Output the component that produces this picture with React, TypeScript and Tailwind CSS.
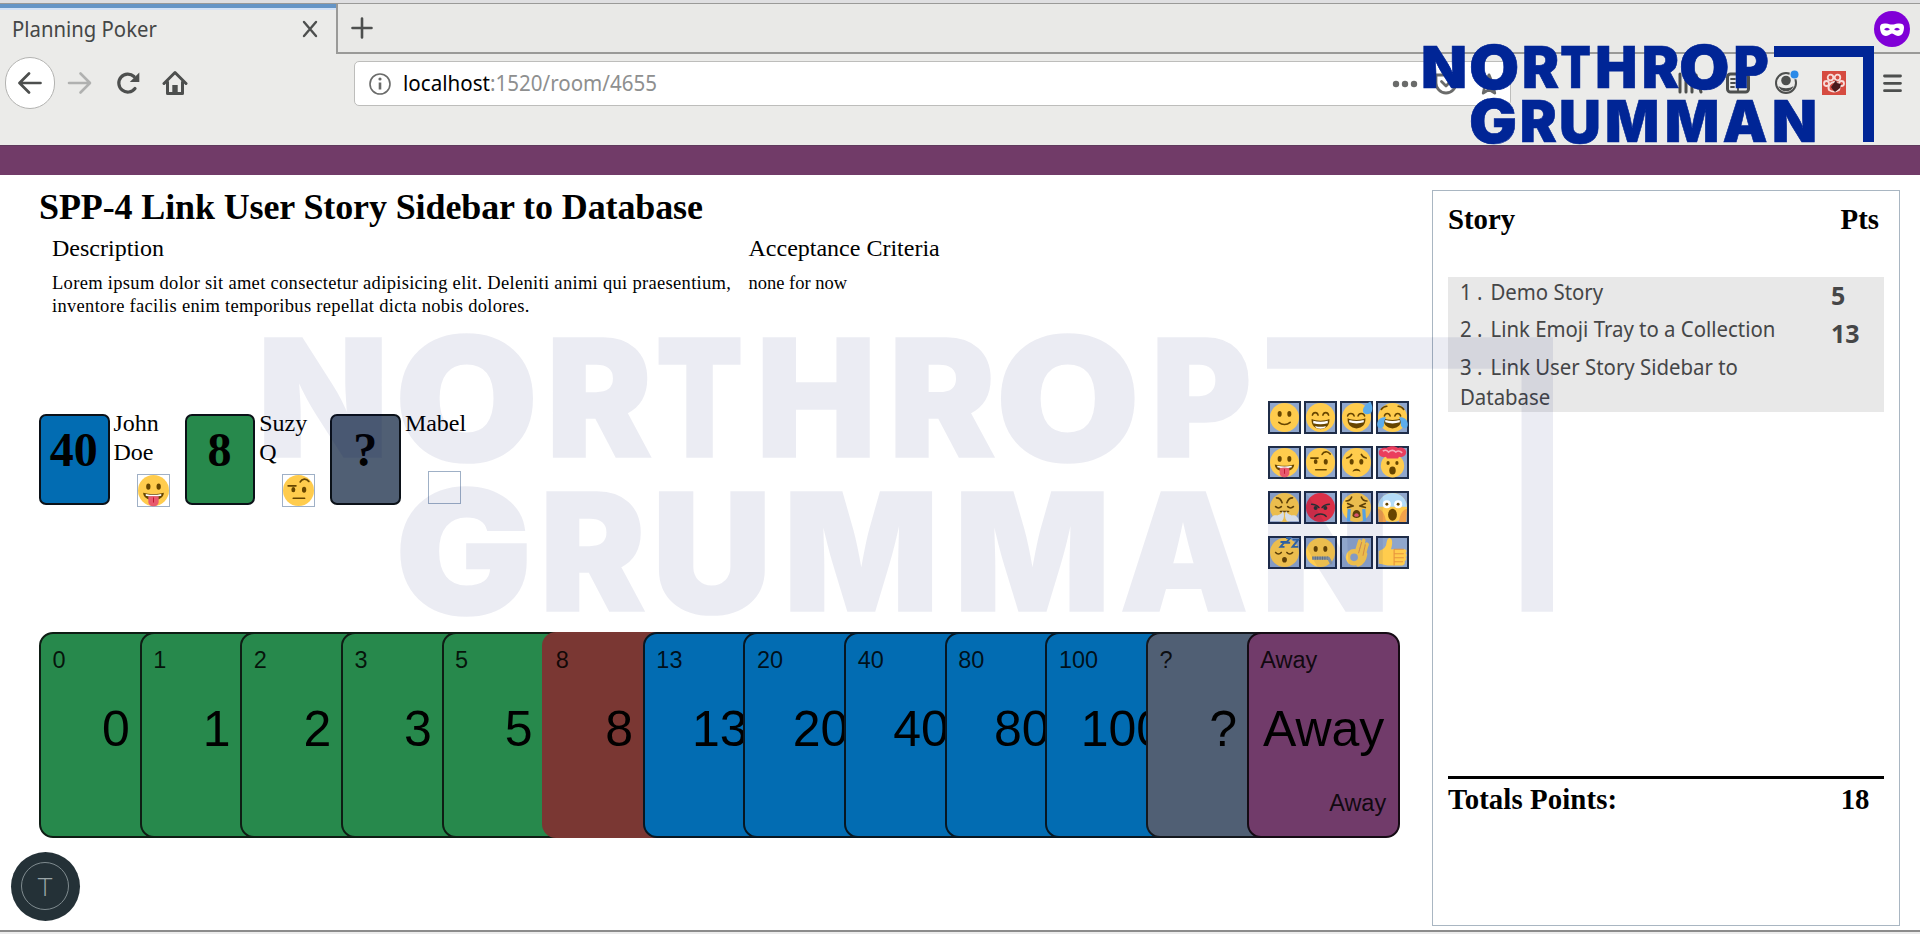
import React, { useMemo } from "react";

/* ---------- Brand wordmark ---------- */

type Glyph = [string, number, number];

const ROW_ONE: Glyph[] = [
  ["N", 0, 42],
  ["O", 47.7, 95],
  ["R", 101, 136],
  ["T", 138, 167],
  ["H", 174.3, 212.5],
  ["R", 220.7, 256],
  ["O", 257.7, 305.3],
  ["P", 312.3, 345],
];
const ROW_TWO: Glyph[] = [
  ["G", 47.7, 92.3],
  ["R", 98.7, 133.7],
  ["U", 138, 175.7],
  ["M", 184, 234],
  ["M", 243.7, 294],
  ["A", 300.3, 344],
  ["N", 351, 392],
];
const CAP = 42.3;
const OVERSHOOT = 1.8;
const OUTLINE = 1;
const FACE = "900 100px Inter, 'Open Sans', sans-serif";

/* Fits every letter's ink, outline included, to its slot in the mark. */
function measure(rows: [Glyph[], number][]) {
  const ctx = document.createElement("canvas").getContext("2d")!;
  ctx.font = FACE;
  const half = OUTLINE / 2;
  return rows.flatMap(([row, baseline]) =>
    row.map(([ch, from, to]) => {
      const m = ctx.measureText(ch);
      const left = -m.actualBoundingBoxLeft - half;
      const sx = (to - from) / (m.actualBoundingBoxRight + half - left);
      const round = ch === "O" || ch === "G";
      const top = baseline - CAP - (round ? OVERSHOOT : 0);
      const bottom = baseline + (round || ch === "U" ? OVERSHOOT : 0);
      const ascent = m.actualBoundingBoxAscent + half;
      const sy = (bottom - top) / (ascent + m.actualBoundingBoxDescent + half);
      return { ch, transform: `translate(${from - left * sx} ${top + ascent * sy}) scale(${sx} ${sy})` };
    }),
  );
}

function Wordmark({ className }: { className: string }) {
  const letters = useMemo(() => measure([[ROW_ONE, 42.3], [ROW_TWO, 96]]), []);
  return (
    <svg viewBox="0 0 451 96" className={className} fill="currentColor" overflow="visible">
      <g stroke="currentColor" strokeWidth={OUTLINE} strokeLinejoin="miter">
        {letters.map((l, i) => (
          <text key={i} transform={l.transform} className="font-['Inter','Open_Sans',sans-serif] text-[100px] font-black">
            {l.ch}
          </text>
        ))}
      </g>
      <path d="M351 0H451V96H440V11H351Z" />
    </svg>
  );
}

/* ---------- Emoji ---------- */

const Y = "#ffcc4d";
const B = "#664500";

const Face = ({ fill = Y }: { fill?: string }) => <circle cx="18" cy="18" r="18" fill={fill} />;
const Eyes = ({ y = 13.5 }: { y?: number }) => (
  <g fill={B}>
    <ellipse cx="12" cy={y} rx="2.5" ry="3.5" />
    <ellipse cx="24" cy={y} rx="2.5" ry="3.5" />
  </g>
);
const line = { fill: "none", stroke: B, strokeWidth: 2, strokeLinecap: "round" as const, strokeLinejoin: "round" as const };
const Grin = ({ y = 0 }: { y?: number }) => (
  <g transform={`translate(0 ${y})`}>
    <path d="M7 19c3 1.300 7 2 11 2s8-.7 11-2c.8 7-4 12.500-11 12.500S6.200 26 7 19Z" fill={B} />
    <path d="M9 21c3 1 6 1.400 9 1.400s6-.4 9-1.400v3c-3 1-6 1.300-9 1.300S12 25 9 24Z" fill="#fff" />
  </g>
);

const EMOJI: Record<string, React.ReactNode> = {
  smile: (
    <>
      <Face />
      <Eyes />
      <path d="M11 24c4 3.500 10 3.500 14 0" {...line} />
    </>
  ),
  beam: (
    <>
      <Face />
      <path d="M8 15c1-4 6-4 7 0M21 15c1-4 6-4 7 0" {...line} />
      <Grin y={1} />
      <path d="M11 28.500c5 1.500 9 1.500 14 0l-2 2.500q-5 2-10 0Z" fill="#fff" />
    </>
  ),
  sweat: (
    <>
      <Face />
      <path d="M7 16c1-4 7-4 8 0M20 16c1-4 7-4 8 0" {...line} />
      <Grin />
      <path d="M26 10c-.5-5 4-9 9-12 3 4 4 12 0 15-4 2-8.500 1-9-3Z" fill="#5dadec" />
    </>
  ),
  joy: (
    <>
      <Face />
      <path d="M4 8c2-3 4-4 7-4M32 8c-2-3-4-4-7-4M8 16c1-4 6-4 7 0M21 16c1-4 6-4 7 0" {...line} />
      <Grin />
      <path d="M10 18C5 17-1 20-1 27c0 5 6 6 8 2 1-2 0-7 3-11ZM26 18c5-1 11 2 11 9 0 5-6 6-8 2-1-2 0-7-3-11Z" fill="#5dadec" />
    </>
  ),
  tongue: (
    <>
      <Face />
      <Eyes />
      <path d="M6 20.500c7 2 17 2 24 0 0 5-5 8.500-12 8.500S6 25.500 6 20.500Z" fill={B} />
      <path d="M9 22c6 1.300 12 1.300 18 0v2c-6 1.500-12 1.500-18 0Z" fill="#fff" />
      <path d="M12 25c4-1 8-1 12 0v6c0 7-12 7-12 0Z" fill="#e8596e" />
      <path d="M18 26v6" stroke="#be1931" strokeWidth="1.200" />
    </>
  ),
  brow: (
    <>
      <Face />
      <ellipse cx="12" cy="17" rx="2.300" ry="3" fill={B} />
      <ellipse cx="24.500" cy="17" rx="2.500" ry="3.500" fill={B} />
      <path d="M6 12.500h9M20 8c2-4 7-4.500 10-.5M12 27h13" {...line} />
    </>
  ),
  worried: (
    <>
      <Face />
      <Eyes y={17} />
      <path d="M6 12.500c3-.5 5-2.500 6-4.500M30 12.500c-3-.5-5-2.500-6-4.500" {...line} />
      <path d="M13 29.500c1-5 9-5 10 0-3-1.500-7-1.500-10 0Z" fill={B} />
    </>
  ),
  explode: (
    <>
      <circle cx="18" cy="22" r="14.500" fill={Y} />
      <path d="M1 6C1 1 7-1 10 0c5-3 11-3 15 0 4-2 10 1 10 5 0 5-5 7-9 6l-1 2H11l-1-2C6 12 1 11 1 6Z" fill="#ea3d5d" />
      <path d="M6 4q4-3 7 1 5-4 9 0 4-3 8 1" stroke="#f4abba" strokeWidth="2" fill="none" />
      <ellipse cx="12.500" cy="18.500" rx="2" ry="2.500" fill={B} />
      <ellipse cx="23.500" cy="18.500" rx="2" ry="2.500" fill={B} />
      <ellipse cx="18" cy="28" rx="4" ry="5" fill={B} />
    </>
  ),
  steam: (
    <>
      <Face />
      <path d="M8 6c4 0 6 3 7 6M28 6c-4 0-6 3-7 6M7 17c2 2 5 2 7 0M22 17c2 2 5 2 7 0M13 23h10" {...line} />
      <path d="M16 22c-2 5-4 4-7 6-4-1-8 1-9 7h15c3-4 3-9 1-13ZM20 22c2 5 4 4 7 6 4-1 8 1 9 7H21c-3-4-3-9-1-13Z" fill="#e9eff3" />
    </>
  ),
  rage: (
    <>
      <Face fill="#da2f47" />
      <path d="M7 14c4 0 7 1.500 9 4M29 14c-4 0-7 1.500-9 4" {...line} stroke="#292f33" />
      <circle cx="12" cy="18.500" r="2.500" fill="#292f33" />
      <circle cx="24" cy="18.500" r="2.500" fill="#292f33" />
      <path d="M11 29c3-4 11-4 14 0" {...line} stroke="#292f33" />
    </>
  ),
  sob: (
    <>
      <Face />
      <path d="M5 10c3 0 6-2 7-5M31 10c-3 0-6-2-7-5M7 13l7 3-7 2M29 13l-7 3 7 2" {...line} />
      <path d="M7 20h4l-1 15H6ZM25 20h4l1 15h-4Z" fill="#5dadec" />
      <path d="M13 28c0-9 10-9 10 0 0 4-10 4-10 0Z" fill={B} />
      <path d="M15 28c1-4 5-4 6 0-1 2-5 2-6 0Z" fill="#ea596e" />
    </>
  ),
  scream: (
    <>
      <Face />
      <path d="M0 17C1 6 9 0 18 0s17 6 18 17Z" fill="#b4dcf8" />
      <circle cx="11" cy="14" r="5" fill="#fff" />
      <circle cx="25" cy="14" r="5" fill="#fff" />
      <circle cx="11" cy="14" r="1.800" fill={B} />
      <circle cx="25" cy="14" r="1.800" fill={B} />
      <ellipse cx="18" cy="27" rx="5.500" ry="7.500" fill={B} />
      <path d="M0 20c5 0 9 7 10 16H1ZM36 20c-5 0-9 7-10 16h9Z" fill="#f2a24a" />
    </>
  ),
  sleep: (
    <>
      <Face />
      <path d="M7 18c2 2.500 5 2.500 7 0M21 18c2 2.500 5 2.500 7 0" {...line} />
      <ellipse cx="18" cy="27" rx="3" ry="3.500" fill={B} />
      <path d="M13 5h5l-5 6h5M20 0h5l-5 6h5M28 2h7l-7 9h7" fill="none" stroke="#3569a8" strokeWidth="2.400" />
    </>
  ),
  zipper: (
    <>
      <Face />
      <Eyes />
      <path d="M8 25h20" stroke="#8b9aa6" strokeWidth="4" />
      <path d="M8 25h20" stroke="#5c6f7d" strokeWidth="4" strokeDasharray="1 2" />
      <path d="M28 25l3 6" stroke="#8b9aa6" strokeWidth="3.500" strokeLinecap="round" />
    </>
  ),
  ok: (
    <>
      <g fill="none" stroke={Y} strokeLinecap="round" strokeLinejoin="round">
        <circle cx="15" cy="24" r="7.500" strokeWidth="5.500" />
        <path d="M18 17L22 4M23 22L27 3" strokeWidth="4.500" />
        <path d="M24 26C29 20 28 14 31 8M20 33C26 31 28 26 29 20" strokeWidth="5" />
      </g>
      <path d="M20.500 19L24.500 5M26 22L29 8" stroke="#e8953e" strokeWidth="1.200" fill="none" />
    </>
  ),
  thumb: (
    <>
      <path d="M1 16c4-1 7-3 9-7 1-4 1-8 4-9 5 0 4 9 2 14h17c3 0 3 4 1 5 2 1 2 4 0 5 2 1 1 4-1 5 1 2 0 5-3 5H12c-4 0-7-2-11-2Z" fill={Y} />
      <path d="M20 14v20M20 19.500h12M20 24.500h12M20 29.500h11M20 14h12" stroke="#e8953e" strokeWidth="1.400" fill="none" />
    </>
  ),
};

const Emoji = ({ name, className }: { name: string; className: string }) => (
  <svg viewBox="0 0 36 36" className={className}>
    {EMOJI[name]}
  </svg>
);

/* ---------- Browser chrome ---------- */

const stroke = { fill: "none", stroke: "#4d4f4e", strokeWidth: 3, strokeLinecap: "round" as const, strokeLinejoin: "round" as const };

function TabStrip() {
  return (
    <div className="flex h-[50px] bg-[#e9e9e7]">
      <div className="flex w-[336px] items-center justify-between border-t-[4px] border-[#6595c6] bg-[#ebebe9] pr-[18px] pb-[4px] pl-[12px] shadow-[inset_0_2px_0_#d3e2f6]">
        <span className="origin-left scale-x-[0.967] text-[21px] leading-[28px] text-[#454746]">Planning Poker</span>
        <svg viewBox="0 0 16 18" className="h-[18px] w-[16px]">
          <path d="M2 2L14 16M14 2L2 16" {...stroke} strokeWidth={2.4} />
        </svg>
      </div>
      <div className="flex flex-1 items-center justify-between border-b-2 border-l-2 border-[#9a9a98] pr-[10px] pl-[13px]">
        <svg viewBox="0 0 22 22" className="-mt-[1px] h-[22px] w-[22px]">
          <path d="M11 1.500V20.500M1.500 11H20.500" {...stroke} strokeWidth={2.6} />
        </svg>
        <svg viewBox="0 0 36 36" className="mt-[2px] h-[36px] w-[36px]">
          <circle cx="18" cy="18" r="18" fill="#8000d7" />
          <path
            fillRule="evenodd"
            fill="#fff"
            d="M6 16c0-3 3-4 6-3.500 3 .4 4 1 6 1s3-.6 6-1c3-.5 6 .5 6 3.500 0 5-2 9-6 9-3 0-4-2.500-6-2.500S15 25 12 25c-4 0-6-4-6-9ZM10 18.300q3 2.500 6 0q-3-3-6 0ZM20 18.300q3 2.500 6 0q-3-3-6 0Z"
          />
        </svg>
      </div>
    </div>
  );
}

function NavBar() {
  return (
    <div className="flex h-[91px] items-start bg-[#ebebe9] pt-[3px]">
      <div className="ml-[5px] flex h-[52px] w-[50px] items-center justify-center rounded-full border-[1.500px] border-[#b3b3b1] bg-white">
        <svg viewBox="0 0 24 24" className="h-[24px] w-[24px]">
          <path d="M22.500 12H2M11 2.500L1.500 12L11 21.500" {...stroke} strokeWidth={2.7} />
        </svg>
      </div>
      <svg viewBox="0 0 24 24" className="mt-[14px] ml-[12px] h-[24px] w-[25px]">
        <path d="M1.500 12H22M13 2.500L22.500 12L13 21.500" {...stroke} stroke="#b0b1b0" strokeWidth={2.6} />
      </svg>
      <svg viewBox="0 0 24 24" className="mt-[14px] ml-[24px] h-[24px] w-[25px]">
        <path d="M18.500 17.500A9 9 0 1 1 17.500 5.500" {...stroke} strokeWidth={3.2} />
        <path d="M22.800 1.500V11H13.300Z" fill="#4d4f4e" />
      </svg>
      <svg viewBox="0 0 26 26" className="mt-[13px] ml-[21px] h-[26px] w-[26px]">
        <path d="M2 13.500L13 2.500L24 13.500M5.500 12V23.500H20.500V12" {...stroke} />
        <path d="M10.300 23V15h5.400v8Z" fill="#4d4f4e" />
      </svg>
      <div className="mt-[4px] ml-[166px] flex h-[45px] w-[1157px] items-center rounded-[5px] border-[1.500px] border-[#bdbdbb] bg-white pl-[14px]">
        <svg viewBox="0 0 22 22" className="h-[22px] w-[22px]">
          <circle cx="11" cy="11" r="10" fill="none" stroke="#6a6b6a" strokeWidth="1.600" />
          <path d="M11 9.500V16.500" stroke="#6a6b6a" strokeWidth="2.600" />
          <circle cx="11" cy="6" r="1.600" fill="#6a6b6a" />
        </svg>
        <span className="mb-[3px] ml-[12px] origin-left scale-x-[0.935] text-[22px] leading-[28px] text-[#8e8f8f]">
          <span className="text-black">localhost</span>:1520/room/4655
        </span>
        <div className="mr-[10px] ml-auto flex items-center">
          <svg viewBox="0 0 26 8" className="h-[8px] w-[26px]" fill="#6a6b6a">
            <circle cx="4" cy="4" r="3.200" />
            <circle cx="13" cy="4" r="3.200" />
            <circle cx="22" cy="4" r="3.200" />
          </svg>
          <svg viewBox="0 0 24 22" className="ml-[16px] h-[22px] w-[24px]">
            <path d="M2 2H22V10a10 10 0 0 1-20 0ZM7.500 8.500L12 13L16.500 8.500" {...stroke} stroke="#6a6b6a" strokeWidth={2.8} />
          </svg>
          <svg viewBox="0 0 24 24" className="ml-[20px] h-[26px] w-[22px]">
            <path d="M12 2l3 7 7 .7-5.300 5 1.600 7.300L12 18l-6.300 4 1.600-7.300L2 9.700 9 9Z" {...stroke} stroke="#6a6b6a" />
          </svg>
        </div>
      </div>
      <div className="mt-[14px] ml-auto flex items-center pr-[18px]">
        <svg viewBox="0 0 26 24" className="h-[24px] w-[26px]">
          <path d="M3 3V21M9 3V21M15 3V21M19 4L24 21" {...stroke} />
        </svg>
        <svg viewBox="0 0 26 24" className="ml-[22px] h-[24px] w-[26px]">
          <rect x="2.500" y="3" width="21" height="18" rx="3" {...stroke} />
          <path d="M13 3V21M6 8H10M6 12H10M6 16H9" {...stroke} strokeWidth={1.8} />
        </svg>
        <svg viewBox="0 0 26 26" className="-mt-[2px] ml-[23px] h-[26px] w-[26px]">
          <circle cx="12" cy="14" r="10" {...stroke} strokeWidth={2} />
          <circle cx="12" cy="11.500" r="4.800" fill="#4d4f4e" />
          <path d="M4.500 17c4 3 11 3 15 0-2 7-13 7-15 0Z" fill="#4d4f4e" />
          <circle cx="20.500" cy="5.500" r="5" fill="#ebebe9" />
          <circle cx="20.500" cy="5.500" r="4" fill="#2b8ae8" />
        </svg>
        <svg viewBox="0 0 24 24" className="ml-[22px] h-[24px] w-[24px]">
          <rect width="24" height="24" fill="#d64b40" />
          <g fill="none" stroke="#f7dcd8" strokeWidth="1.800">
            <circle cx="8.500" cy="6.500" r="2.800" />
            <circle cx="15.500" cy="6.500" r="2.800" />
            <circle cx="4.500" cy="12.500" r="2.500" />
            <circle cx="19.500" cy="12.500" r="2.500" />
            <path d="M7 19c-2-4 2-8 5-8s7 4 5 8c-3 2-7 2-10 0Z" />
          </g>
          <path d="M9 16l3-4 2-3 1 3 4 1-1 4-5 4-2-2Z" fill="#4a1a1c" />
        </svg>
        <svg viewBox="0 0 19 20" className="ml-[37px] h-[20px] w-[19px]">
          <path d="M1.500 3H17.500M1.500 10.300H17.500M1.500 17.700H17.500" {...stroke} strokeWidth={2.8} />
        </svg>
      </div>
    </div>
  );
}

/* ---------- Room ---------- */

const PLAYERS = [
  { name: "John Doe", vote: "40", bg: "bg-[#026cb2]", mood: "tongue", gap: "mt-[7px]" },
  { name: "Suzy Q", vote: "8", bg: "bg-[#27894c]", mood: "brow", gap: "mt-[7px]" },
  { name: "Mabel", vote: "?", bg: "bg-[#505f74]", mood: "", gap: "mt-[33px]" },
];

const TRAY = [
  "smile", "beam", "sweat", "joy",
  "tongue", "brow", "worried", "explode",
  "steam", "rage", "sob", "scream",
  "sleep", "zipper", "ok", "thumb",
];

const GREEN = "bg-[#27894c] border-[#0e1d14]";
const BLUE = "bg-[#026cb2] border-[#071722]";
const DECK = [
  { value: "0", tone: GREEN },
  { value: "1", tone: GREEN },
  { value: "2", tone: GREEN },
  { value: "3", tone: GREEN },
  { value: "5", tone: GREEN },
  { value: "8", tone: "bg-[#7a3733] border-[#7a3733]" },
  { value: "13", tone: BLUE },
  { value: "20", tone: BLUE },
  { value: "40", tone: BLUE },
  { value: "80", tone: BLUE },
  { value: "100", tone: BLUE },
  { value: "?", tone: "bg-[#505f74] border-[#14181e]" },
  { value: "Away", tone: "bg-[#713b6a] border-[#150b14]" },
];

const STORIES = [
  { title: "Demo Story", points: "5" },
  { title: "Link Emoji Tray to a Collection", points: "13" },
  { title: "Link User Story Sidebar to Database", points: "" },
];

function Players() {
  return (
    <div className="flex pt-[13px]">
      {PLAYERS.map((p) => (
        <div key={p.name} className="flex w-[145.700px] shrink-0">
          <div
            className={`h-[90.500px] w-[70.500px] shrink-0 rounded-[7px] border-2 border-[#0b1118] pr-[1px] text-center text-[48px] leading-[68px] font-bold ${p.bg}`}
          >
            {p.vote}
          </div>
          <div className="-mt-[5px] ml-[4px] w-[62px] text-[24px] leading-[29px]">
            <div>{p.name}</div>
            <div className={`ml-[23px] h-[33px] w-[33px] border-[1.500px] border-[#9fb0c6] ${p.gap}`}>
              {p.mood && <Emoji name={p.mood} className="h-full w-full overflow-visible" />}
            </div>
          </div>
        </div>
      ))}
    </div>
  );
}

function EmojiTray() {
  return (
    <div className="-mt-[0.500px] grid grid-cols-4 content-start gap-x-[3px] gap-y-[12px]">
      {TRAY.map((name) => (
        <div key={name} className="h-[33px] w-[33px] border-2 border-[#1f2d48] bg-[#8fa6cc]">
          <Emoji name={name} className="h-full w-full overflow-visible" />
        </div>
      ))}
    </div>
  );
}

function Deck() {
  return (
    <div className="flex font-['Liberation_Sans',Arial,sans-serif]">
      {DECK.map((c) => (
        <div key={c.value} className="w-[100.650px] shrink-0">
          <div className={`relative flex h-[205.500px] w-[153px] flex-col rounded-[14px] border-2 px-[11.500px] pt-[12px] text-[23.500px] leading-[28px] text-black/85 ${c.tone}`}>
            <div>{c.value}</div>
            <div className="-mr-[10.500px] -ml-[11.500px] mt-[27px] pl-[2px] text-center text-[50px] leading-[56px] text-black">
              {c.value}
            </div>
            <div className="mt-[32px] text-right">{c.value}</div>
          </div>
        </div>
      ))}
    </div>
  );
}

function Sidebar() {
  return (
    <aside className="mt-[15px] flex h-[736px] w-[468px] flex-col border-[1.500px] border-[#a9b6c2] px-[15px] pt-[11px] text-[28.800px] leading-[34px] font-bold">
      <div className="flex justify-between pr-[5px]">
        <span>Story</span>
        <span>Pts</span>
      </div>
      <ol className="mt-[41px] h-[135px] bg-[#e8e8e8] font-['Noto_Sans','Open_Sans',sans-serif] text-[22.400px] leading-[30px] font-normal text-[#454647]">
        {STORIES.map((s, i) => (
          <li key={s.title} className="flex h-[37.500px] justify-between pl-[12px]">
            <span className="-mt-[0.500px] w-[370px] shrink-0 origin-left scale-x-[0.91]">
              <span className="mr-[3px]">{i + 1} .</span> {s.title}
            </span>
            <span className="mt-[3px] -ml-[40px] w-[53px] text-[25px] font-bold">{s.points}</span>
          </li>
        ))}
      </ol>
      <div className="mt-auto mb-[109px] flex justify-between border-t-[3.500px] border-black pt-[3px] pr-[14.500px]">
        <span className="tracking-[0.1px]">Totals Points:</span>
        <span>18</span>
      </div>
    </aside>
  );
}

export default function App() {
  return (
    <div className="relative h-[934px] w-[1920px] overflow-hidden bg-white font-['Noto_Sans','Open_Sans',sans-serif]">
      <header>
        <div className="h-[4px] border-b-[1.500px] border-[#9a9a98] bg-[#dfdfe1]" />
        <TabStrip />
        <NavBar />
      </header>
      <div className="h-[30px] border-t-[1.500px] border-[#5f3a5b] bg-[#713b68]" />

      <main className="flex h-[755px] font-['Liberation_Serif','Times_New_Roman',serif] text-black">
        <div className="w-[1432px] pl-[39px]">
          <section className="h-[226px] pt-[12px]">
            <h1 className="text-[36px] leading-[40px] font-bold tracking-[-0.12px]">SPP-4 Link User Story Sidebar to Database</h1>
            <div className="mt-[7px] grid grid-cols-[696.500px_1fr] pl-[13px] text-[18.500px] leading-[23.300px]">
              <div>
                <h2 className="mb-[10px] text-[24px] leading-[28px]">Description</h2>
                <p className="tracking-[0.31px]">
                  Lorem ipsum dolor sit amet consectetur adipisicing elit. Deleniti animi qui praesentium, inventore
                  facilis enim temporibus repellat dicta nobis dolores.
                </p>
              </div>
              <div>
                <h2 className="mb-[10px] text-[24px] leading-[28px]">Acceptance Criteria</h2>
                <p>none for now</p>
              </div>
            </div>
          </section>
          <section className="flex h-[231px] w-[1370px] justify-between">
            <Players />
            <EmojiTray />
          </section>
          <Deck />
          <div className="-ml-[28.500px] mt-[14px] flex h-[69px] w-[69px] items-center justify-center rounded-full bg-[#243137]">
            <div className="flex h-[48px] w-[48px] items-center justify-center rounded-full border-[1.500px] border-[#7f8b8f] font-['Lato','Open_Sans',sans-serif] text-[26px] font-light text-[#9aa5a8]">
              T
            </div>
          </div>
        </div>
        <Sidebar />
      </main>
      <div className="h-[4px] border-t-2 border-[#8c8c8c] bg-[#ececec]" />

      <Wordmark className="pointer-events-none absolute top-[336px] left-[263px] h-[277px] w-[1290px] text-[#001469] opacity-[0.08]" />
      <Wordmark className="absolute top-[46px] left-[1423px] h-[96px] w-[451px] text-[#002596]" />
    </div>
  );
}
